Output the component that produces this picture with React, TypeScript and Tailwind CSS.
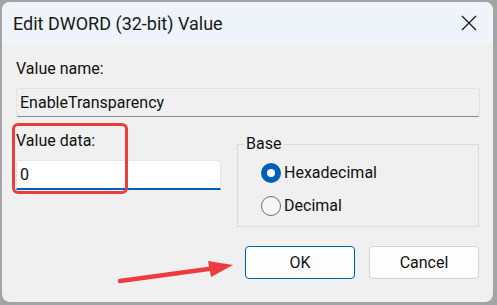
import React from "react";

export default function App() {
  return (
    <div
      className="relative w-[497px] h-[305px] overflow-hidden bg-[#a4a4a4] pl-[2px] pt-[2px]"
      style={{ fontFamily: "Roboto, 'Liberation Sans', sans-serif" }}
    >
      <div className="flex h-[300px] w-[491px] flex-col overflow-hidden rounded-[8px] bg-[#f0f0f0]">
        {/* Title bar */}
        <div className="flex h-[42px] items-center justify-between bg-[#eef4f9] pl-[11px] pr-[16px]">
          <span className="mt-[1px] text-[18px] leading-[22px] text-[#1a1a1a]">Edit DWORD (32-bit) Value</span>
          <svg width="16" height="16" viewBox="0 0 16 16" className="text-[#1a1a1a]">
            <path d="M1 1 L15 15 M15 1 L1 15" stroke="currentColor" strokeWidth="1.3" fill="none" />
          </svg>
        </div>
        {/* Body */}
        <div className="flex flex-col px-[14px] pt-[15px] text-[16px] text-[#111]">
          <div className="leading-[20px]">Value name:</div>
          <div className="mt-[9px] flex h-[29px] w-[464px] items-center rounded-[3px] border border-[#e2e2e2] border-b-[#8a8a8a] bg-[#f0f0f0] pl-[3px]">
            EnableTransparency
          </div>
          <div className="mt-[13px] flex">
            <div className="flex w-[206px] flex-col">
              <div className="mt-[1px] leading-[20px]">Value data:</div>
              <div className="mt-[9px] flex h-[30px] items-center rounded-t-[3px] border border-[#e5e5e5] border-b-2 border-b-[#005fb8] bg-white pl-[3px]">
                0
              </div>
            </div>
            <fieldset className="ml-[16px] mt-[4px] h-[93px] w-[243px] border border-[#dcdcdc] pl-[23px]">
              <legend className="ml-[-17px] px-[2px] leading-[20px]">Base</legend>
              <div className="mt-[9px] flex items-center gap-[3px]">
                <span className="flex h-[20px] w-[20px] items-center justify-center rounded-full bg-[#005fb8]">
                  <span className="h-[8px] w-[8px] rounded-full bg-white" />
                </span>
                <span className="leading-[20px]">Hexadecimal</span>
              </div>
              <div className="mt-[13px] flex items-center gap-[3px]">
                <span className="h-[20px] w-[20px] rounded-full border border-[#6e6e6e] bg-[#f6f6f6]" />
                <span className="leading-[20px]">Decimal</span>
              </div>
            </fieldset>
          </div>
          <div className="mt-[19px] flex justify-end gap-[14px]">
            <button className="h-[33px] w-[110px] rounded-[4px] border border-[#005fb8] bg-[#fdfdfd] text-[16px] text-[#111]">
              OK
            </button>
            <button className="h-[33px] w-[110px] rounded-[4px] border border-[#d4d4d4] bg-[#fdfdfd] text-[16px] text-[#111]">
              Cancel
            </button>
          </div>
        </div>
      </div>

      {/* Annotations */}
      <div className="absolute left-[12px] top-[123px] h-[71px] w-[116px] rounded-[6px] border-[3px] border-[#ee3b3f]" />
      <svg className="absolute left-0 top-0" width="497" height="305" viewBox="0 0 497 305">
        <line x1="120" y1="281" x2="212" y2="268.5" stroke="#ee3b3f" strokeWidth="4.5" strokeLinecap="round" />
        <polygon points="233,265 208,261 211,277" fill="#ee3b3f" />
      </svg>
    </div>
  );
}
